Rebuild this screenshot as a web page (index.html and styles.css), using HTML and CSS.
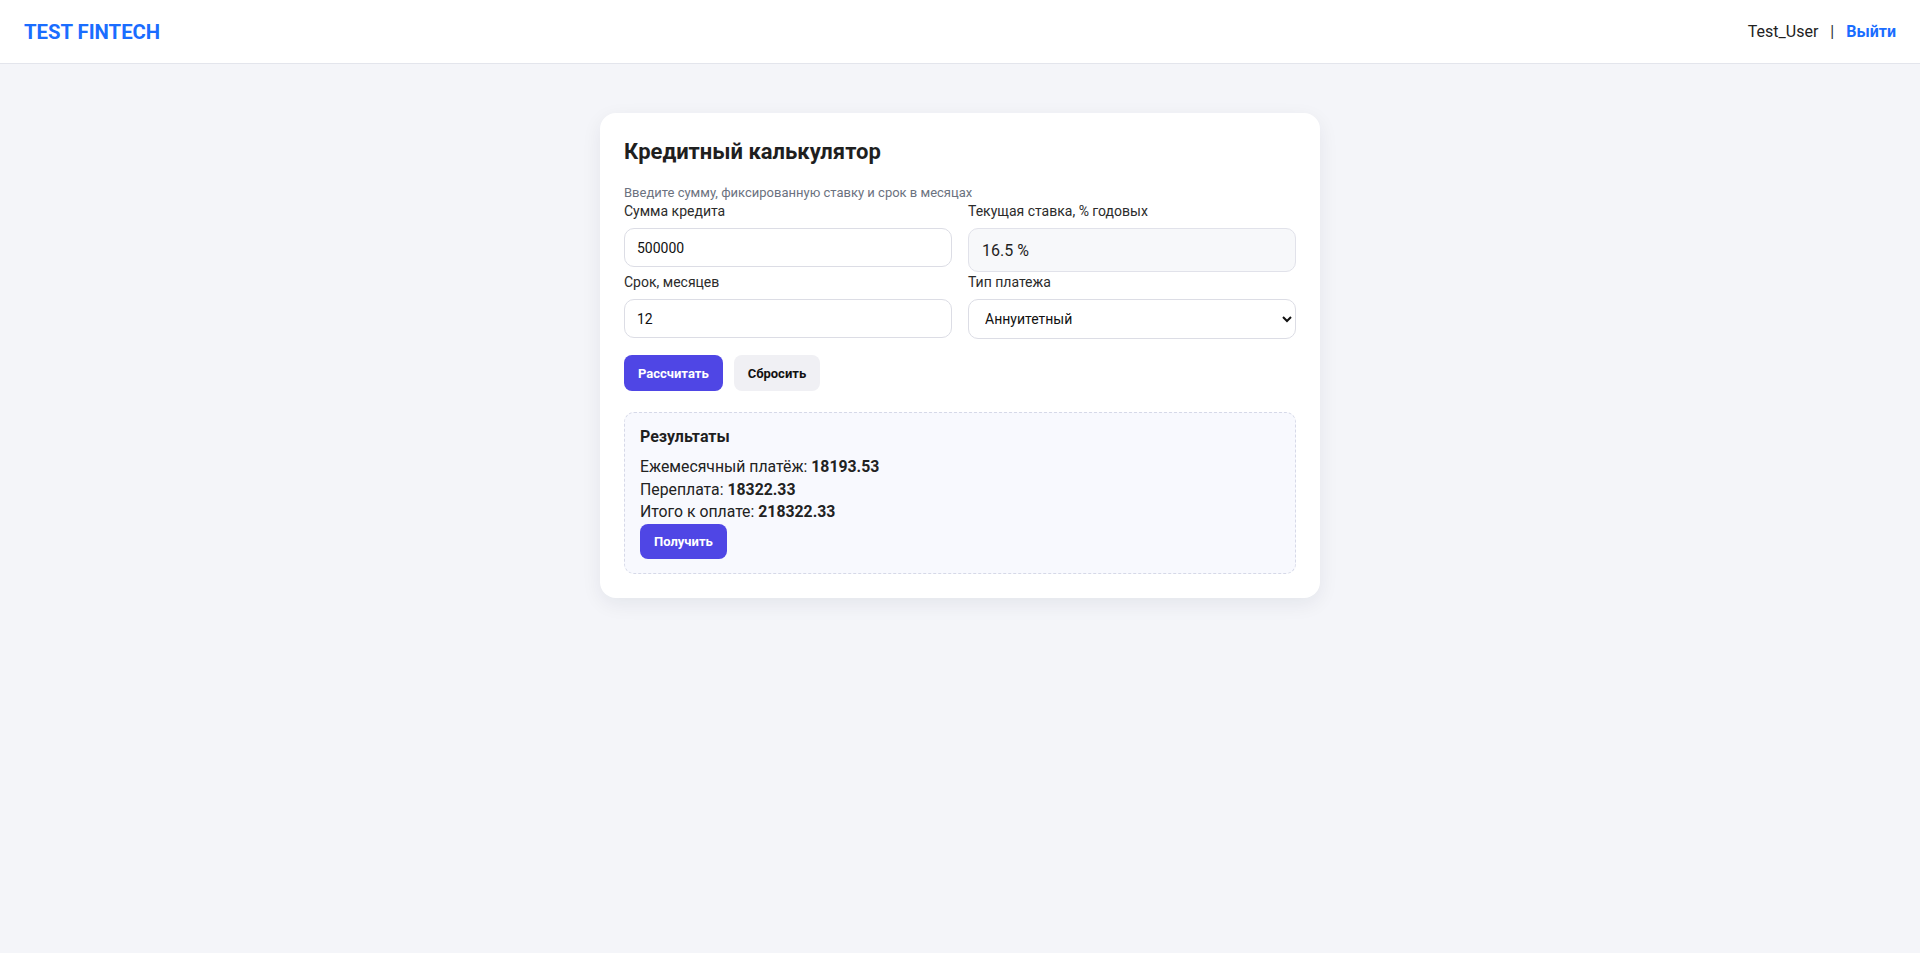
FILE: index.html
```html
<!DOCTYPE html>
<html lang="ru">
<head>
<meta charset="utf-8">
<title>Test Fintech</title>
<link rel="stylesheet" href="styles.css">
</head>
<body>
<header class="topbar">
  <div class="logo">TEST FINTECH</div>
  <div class="user">
    <span class="user-name">Test_User</span>
    <span class="sep">|</span>
    <a class="logout" href="#">Выйти</a>
  </div>
</header>
<main class="page">
  <section class="card">
    <h1 class="card-title">Кредитный калькулятор</h1>
    <p class="hint">Введите сумму, фиксированную ставку и срок в месяцах</p>
    <div class="form-grid">
      <div class="field">
        <label class="label">Сумма кредита</label>
        <input class="input" type="text" value="500000">
      </div>
      <div class="field">
        <label class="label">Текущая ставка, % годовых</label>
        <div class="rate">16.5 %</div>
      </div>
      <div class="field">
        <label class="label">Срок, месяцев</label>
        <input class="input" type="text" value="12">
      </div>
      <div class="field">
        <label class="label">Тип платежа</label>
        <select class="select">
          <option>Аннуитетный</option>
          <option>Дифференцированный</option>
        </select>
      </div>
    </div>
    <div class="actions">
      <button class="btn btn-primary">Рассчитать</button>
      <button class="btn btn-secondary">Сбросить</button>
    </div>
    <div class="results">
      <h2 class="results-title">Результаты</h2>
      <div class="result-line">Ежемесячный платёж: <b>18193.53</b></div>
      <div class="result-line">Переплата: <b>18322.33</b></div>
      <div class="result-line">Итого к оплате: <b>218322.33</b></div>
      <button class="btn btn-primary btn-get">Получить</button>
    </div>
  </section>
</main>
</body>
</html>
```

FILE: styles.css
```css
* { box-sizing: border-box; }
html, body { margin: 0; padding: 0; }
body {
  font-family: Roboto, "Liberation Sans", sans-serif;
  background: #f4f5f9;
  color: #1f2328;
  min-height: 953px;
}
.topbar {
  height: 64px;
  background: #ffffff;
  border-bottom: 1px solid #e3e5ec;
  display: flex;
  align-items: center;
  justify-content: space-between;
  padding: 0 24px;
}
.logo {
  font-size: 20.3px;
  font-weight: 700;
  color: #1a6dff;
}
.user {
  display: flex;
  align-items: center;
  gap: 12px;
  font-size: 16px;
}
.user-name { color: #222; }
.sep { color: #333; }
.logout {
  color: #1a6dff;
  font-weight: 700;
  text-decoration: none;
}
.page {
  display: flex;
  justify-content: center;
  padding-top: 49px;
}
.card {
  width: 720px;
  background: #ffffff;
  border-radius: 16px;
  padding: 24px;
  box-shadow: 0 6px 20px rgba(20, 30, 60, 0.07);
}
.card-title {
  margin: 0;
  font-size: 22px;
  font-weight: 700;
  line-height: 30px;
  color: #1f1f1f;
}
.hint {
  margin: 17px 0 0;
  font-size: 13px;
  line-height: 18px;
  color: #6b7280;
}
.form-grid {
  display: grid;
  grid-template-columns: 1fr 1fr;
  column-gap: 16px;
  row-gap: 1px;
}
.field { display: flex; flex-direction: column; }
.label {
  font-size: 14px;
  line-height: 18px;
  color: #2b2b2b;
  margin-bottom: 8px;
}
.input {
  height: 39px;
  border: 1px solid #dcdde5;
  border-radius: 10px;
  padding: 0 12px;
  font-family: Roboto, "Liberation Sans", sans-serif;
  font-size: 14px;
  color: #111;
  background: #fff;
  outline: none;
}
.rate {
  height: 44px;
  border: 1px solid #e1e2ea;
  border-radius: 10px;
  background: #f7f8fa;
  padding: 0 13px;
  display: flex;
  align-items: center;
  font-size: 16px;
  color: #1f1f1f;
}
.select {
  height: 40px;
  border: 1px solid #dcdde5;
  border-radius: 10px;
  padding: 0 12px;
  font-family: Roboto, "Liberation Sans", sans-serif;
  font-size: 14px;
  color: #111;
  background: #fff;
  outline: none;
}
.actions {
  display: flex;
  gap: 11px;
  margin-top: 16px;
}
.btn {
  border: none;
  border-radius: 8px;
  font-family: Roboto, "Liberation Sans", sans-serif;
  font-size: 13px;
  font-weight: 700;
  cursor: pointer;
}
.btn-primary {
  background: #4f46e5;
  color: #fff;
  height: 36px;
  padding: 0 14px;
}
.btn-secondary {
  background: #f0f0f4;
  color: #111;
  height: 36px;
  padding: 0 14px;
}
.results {
  margin-top: 21px;
  border: 1px dashed #d6d9e8;
  border-radius: 10px;
  background: #f8f9fe;
  padding: 13px 15px 14px;
  display: flex;
  flex-direction: column;
  align-items: flex-start;
}
.results-title {
  margin: 0 0 8px;
  font-size: 16px;
  font-weight: 700;
  line-height: 22px;
  color: #1f1f1f;
}
.result-line {
  font-size: 15.8px;
  line-height: 22.5px;
  color: #222;
}
.result-line b { font-weight: 700; }
.btn-get {
  height: 35px;
  padding: 0 14px;
}
```
